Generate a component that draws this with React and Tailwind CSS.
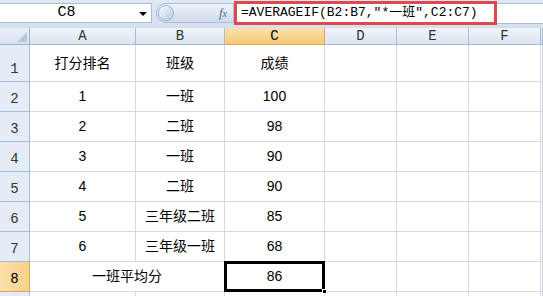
import { useState } from 'react'

const rows = [
  ['打分排名', '班级', '成绩'],
  ['1', '一班', '100'],
  ['2', '二班', '98'],
  ['3', '一班', '90'],
  ['4', '二班', '90'],
  ['5', '三年级二班', '85'],
  ['6', '三年级一班', '68'],
]

const cols = ['A', 'B', 'C', 'D', 'E', 'F', '']

const cellFont = { fontFamily: '"Liberation Sans", "Noto Sans CJK SC", sans-serif' }
const monoFont = { fontFamily: '"Liberation Mono", "Noto Sans CJK SC", monospace' }

export default function App() {
  const [selected] = useState('C8')

  return (
    <div className="w-[543px] h-[296px] overflow-hidden bg-white select-none">
      {/* 名称框 + 编辑栏 */}
      <div className="h-[28px] flex items-start bg-gradient-to-b from-[#dfe8f4] to-[#d5e0ef] pt-[3px]">
        <div className="w-[152px] h-[20px] bg-white border-y border-r border-[#a8bcd4] flex items-center relative">
          <span className="flex-1 text-center text-[15px] text-black pr-[18px]" style={monoFont}>{selected}</span>
          <span className="absolute right-[4px] top-[8px] w-0 h-0 border-x-[4px] border-x-transparent border-t-[4px] border-t-black" />
        </div>
        <div className="w-[78px] h-[20px] ml-[4px] rounded-l-full bg-gradient-to-b from-[#eef3fa] to-[#cfdbea] border border-[#a9bdd5] flex items-center">
          <span className="w-[16px] h-[16px] ml-[1px] rounded-full bg-gradient-to-br from-white to-[#b9c8dc] border border-[#9fb4cd]" />
          <span className="ml-auto mr-[6px] text-[13px] italic text-[#5a6b84]" style={{ fontFamily: '"Liberation Serif", serif' }}>
            f<span className="text-[10px]">x</span>
          </span>
        </div>
        <div className="flex-1 h-[24px] -mt-[2px] flex items-stretch">
          <div className="w-[263px] border-[3px] border-[#e3474e] bg-white flex items-center pl-[4px]">
            <span className="text-[13px] text-black whitespace-nowrap" style={monoFont}>=AVERAGEIF(B2:B7,″*一班″,C2:C7)</span>
          </div>
          <div className="flex-1 bg-white border-y border-[#a8bcd4] mt-[2px] mb-[1px]" />
        </div>
      </div>

      {/* 表格 */}
      <div
        className="grid grid-cols-[30px_106px_89px_100px_72px_72px_72px_2px] grid-rows-[17px_37px_30px_30px_30px_30px_30px_30px_30px_30px]"
      >
        {/* 左上角 */}
        <div className="relative bg-gradient-to-b from-[#e9eff8] to-[#d9e3f0] border-r border-b border-[#9fb3cb]">
          <span className="absolute right-[2px] bottom-[2px] w-0 h-0 border-l-[10px] border-l-transparent border-b-[10px] border-b-[#b8c8dc]" />
        </div>
        {cols.map((c) => (
          <div
            key={c || 'x'}
            className={`flex items-center justify-center text-[14px] border-r border-b ${
              c === 'C'
                ? 'bg-gradient-to-b from-[#fbe3b4] to-[#f6c86f] border-[#d9a65a] text-black'
                : 'bg-gradient-to-b from-[#f0f4fa] to-[#dce5f1] border-[#a8bcd4] text-[#333]'
            }`}
            style={monoFont}
          >
            {c}
          </div>
        ))}

        {rows.map((r, i) => (
          <Row key={i} n={i + 1} cells={r} />
        ))}

        {/* 第 8 行 */}
        <RowHead n={8} active />
        <div className="col-span-2 flex items-center justify-center text-[14px] text-black border-r border-b border-[#d4d8e2]" style={cellFont}>
          一班平均分
        </div>
        <div className="relative flex items-center justify-center text-[14px] text-black border-r border-b border-[#d4d8e2]" style={cellFont}>
          86
          <span className="absolute -left-[1px] -top-[1px] -right-[1px] -bottom-[1px] border-[3px] border-black" />
          <span className="absolute -right-[3px] -bottom-[3px] w-[5px] h-[5px] bg-black border border-white" />
        </div>
        <Blank />
        <Blank />
        <Blank />
        <Blank />

        {/* 第 9 行（截断，不显示行号） */}
        <RowHead n="" />
        {cols.map((c) => (
          <Blank key={c || 'x'} />
        ))}
      </div>
    </div>
  )
}

function RowHead({ n, active = false }) {
  return (
    <div
      className={`flex items-end justify-center pb-[1px] text-[14px] border-r border-b ${
        active
          ? 'bg-gradient-to-r from-[#fbe0ab] to-[#f8d08b] border-[#d9a65a] text-black'
          : 'bg-[#e4ecf7] border-[#a8bcd4] text-[#333]'
      }`}
      style={monoFont}
    >
      {n}
    </div>
  )
}

function Blank() {
  return <div className="border-r border-b border-[#d4d8e2]" />
}

function Row({ n, cells }) {
  return (
    <>
      <RowHead n={n} />
      {cells.map((v, i) => (
        <div key={i} className="flex items-center justify-center text-[14px] text-black border-r border-b border-[#d4d8e2]" style={cellFont}>
          {v}
        </div>
      ))}
      <Blank />
      <Blank />
      <Blank />
      <Blank />
    </>
  )
}
